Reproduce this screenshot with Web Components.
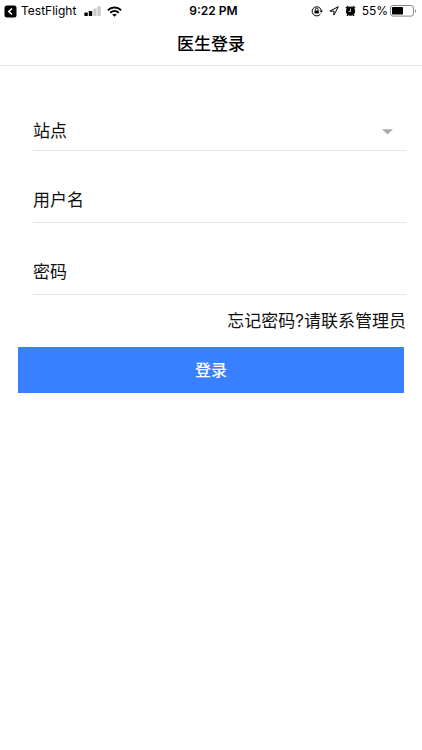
<!DOCTYPE html>
<html lang="zh-CN">
<head>
<meta charset="utf-8">
<meta name="viewport" content="width=device-width, initial-scale=1">
<title>医生登录</title>
<style>
    body {
        margin: 0;
        background-color: white;
        color: #111;
        font-family: Inter, "Noto Sans CJK SC", sans-serif;
        font-size: 17px;
        line-height: 24px;
    }
</style>
</head>
<body>
<login-page></login-page>

<script>
class StatusBar extends HTMLElement {
    constructor() {
        super();
        this.shadowDOM = this.attachShadow({ mode: "open" });
    }

    connectedCallback() {
        this.render();
    }

    render() {
        this.shadowDOM.innerHTML = `
        <style>
        :host {
            display: grid;
            grid-template-columns: 1fr auto 1fr;
            align-items: center;
            height: 22px;
            padding: 0 5px 0 4px;
            font-size: 12px;
            line-height: 22px;
            color: black;
        }

        .group {
            display: flex;
            align-items: center;
        }

        .right {
            justify-content: flex-end;
        }

        .back {
            display: flex;
            align-items: center;
            gap: 4px;
            margin-right: 8px;
            color: inherit;
            text-decoration: none;
        }

        .time {
            padding-left: 6px;
            font-weight: 600;
        }

        .wifi {
            margin-left: 6px;
        }

        .right svg {
            margin-right: 6px;
        }

        .right .battery {
            margin: 0 0 0 2px;
        }
        </style>
        <div class="group">
            <a class="back" href="#">
                <svg width="13" height="13" viewBox="0 0 13 13" aria-hidden="true">
                    <rect x="0.5" y="0.5" width="12" height="12" rx="2.5"/>
                    <path d="M8 3.5 4.8 6.5 8 9.5" fill="none" stroke="white" stroke-width="1.6"/>
                </svg>
                <span>TestFlight</span>
            </a>
            <svg width="17" height="11" viewBox="0 0 17 11" aria-hidden="true">
                <rect x="0.4" y="6.6" width="3.4" height="3.4" rx="0.6"/>
                <rect x="4.8" y="5" width="3.4" height="5" rx="0.6"/>
                <rect x="9.2" y="2.6" width="3.4" height="7.4" rx="0.6" fill="#ccc"/>
                <rect x="13.4" y="0.2" width="3.4" height="9.8" rx="0.6" fill="#ccc"/>
            </svg>
            <svg class="wifi" width="15" height="11" viewBox="0 0 15 11" aria-hidden="true">
                <g fill="none" stroke="black" stroke-width="1.9">
                    <path d="M0.9 4.2C4.6 0.6 10.4 0.6 14.1 4.2"/>
                    <path d="M3.3 6.7C5.7 4.5 9.3 4.5 11.7 6.7"/>
                </g>
                <path d="M5.2 8.5C6.5 7.4 8.5 7.4 9.8 8.5L7.5 10.8Z"/>
            </svg>
        </div>
        <span class="time">9:22 PM</span>
        <div class="group right">
            <svg width="12" height="12" viewBox="0 0 12 12" aria-hidden="true">
                <path d="M9.5 9A4.6 4.6 0 1 1 10.2 5.2" fill="none" stroke="black" stroke-width="1"/>
                <path d="M8.4 5.4H12L10.3 7.8Z"/>
                <rect x="3.5" y="5.4" width="4.4" height="3.2" rx="0.4"/>
                <path d="M4.4 5.6V4.4A1.3 1.3 0 0 1 7 4.4V5.6" fill="none" stroke="black" stroke-width="0.9"/>
            </svg>
            <svg width="10" height="10" viewBox="0 0 10 10" aria-hidden="true">
                <path d="M9.3 0.7 0.9 5.1H4.9V9.1Z" fill="none" stroke="black" stroke-width="1"/>
            </svg>
            <svg width="11" height="12" viewBox="0 0 11 12" aria-hidden="true">
                <circle cx="5.5" cy="6.2" r="4.6"/>
                <path d="M0.9 3.3 3.2 1.3M7.8 1.3 10.1 3.3" stroke="black" stroke-width="1.5"/>
                <path d="M2.8 9.6 2 10.8M8.2 9.6 9 10.8" stroke="black" stroke-width="1.2"/>
                <path d="M5.5 3.6V6.5H3.6" fill="none" stroke="white" stroke-width="0.8"/>
            </svg>
            <span>55%</span>
            <svg class="battery" width="27" height="12" viewBox="0 0 27 12" aria-hidden="true">
                <rect x="0.5" y="0.5" width="23" height="10.6" rx="2.5" fill="none" stroke="#888"/>
                <rect x="2" y="2" width="11" height="7.6" rx="0.8"/>
                <path d="M25 4V7.8C26.4 7.2 26.4 4.6 25 4Z" fill="#888"/>
            </svg>
        </div>
        `;
    }
}

class NavBar extends HTMLElement {
    constructor() {
        super();
        this.shadowDOM = this.attachShadow({ mode: "open" });
    }

    connectedCallback() {
        this.render();
    }

    render() {
        this.shadowDOM.innerHTML = `
        <style>
        :host {
            display: block;
            padding: 10px 16px 9px;
            border-bottom: 1px solid #e2e2e2;
            text-align: center;
        }

        h1 {
            margin: 0;
            font-size: 17px;
            line-height: 24px;
            font-weight: 500;
            color: black;
        }
        </style>
        <h1><slot></slot></h1>
        `;
    }
}

const fieldStyle = `
        :host {
            display: block;
        }

        .field {
            display: flex;
            align-items: flex-end;
            box-sizing: border-box;
            height: 72px;
            padding-bottom: 10px;
            border-bottom: 1px solid #e4e4e4;
        }

        input, select {
            flex: 1;
            min-width: 0;
            height: 24px;
            margin: 0 0 0 12px;
            padding: 0;
            border: 0;
            outline: 0;
            background: transparent;
            color: inherit;
            font: inherit;
        }
`;

class TextField extends HTMLElement {
    constructor() {
        super();
        this.shadowDOM = this.attachShadow({ mode: "open" });
    }

    connectedCallback() {
        this.render();
    }

    render() {
        const type = this.getAttribute("type") || "text";
        this.shadowDOM.innerHTML = `
        <style>${fieldStyle}</style>
        <div class="field">
            <label for="fieldInput">${this.getAttribute("label")}</label>
            <input id="fieldInput" type="${type}">
        </div>
        `;
    }
}

class SelectField extends HTMLElement {
    constructor() {
        super();
        this.shadowDOM = this.attachShadow({ mode: "open" });
    }

    connectedCallback() {
        this.render();
    }

    render() {
        this.shadowDOM.innerHTML = `
        <style>
        ${fieldStyle}
        .field {
            padding-bottom: 7px;
            padding-right: 13px;
        }

        select {
            appearance: none;
        }

        svg {
            margin-bottom: 8px;
        }
        </style>
        <div class="field">
            <label for="fieldSelect">${this.getAttribute("label")}</label>
            <select id="fieldSelect"><option value=""></option></select>
            <svg width="11" height="6" viewBox="0 0 11 6" aria-hidden="true">
                <path d="M0 0.3H11L5.5 5.6Z" fill="#aaa"/>
            </svg>
        </div>
        `;
    }
}

class PrimaryButton extends HTMLElement {
    constructor() {
        super();
        this.shadowDOM = this.attachShadow({ mode: "open" });
    }

    connectedCallback() {
        this.render();
    }

    render() {
        this.shadowDOM.innerHTML = `
        <style>
        :host {
            display: block;
        }

        button {
            display: block;
            width: 100%;
            padding: 11px 16px;
            border: 0;
            background-color: #3880ff;
            color: white;
            font: inherit;
            font-size: 16px;
            font-weight: 500;
            cursor: pointer;
        }
        </style>
        <button type="button"><slot></slot></button>
        `;
    }
}

class LoginPage extends HTMLElement {
    constructor() {
        super();
        this.shadowDOM = this.attachShadow({ mode: "open" });
    }

    connectedCallback() {
        this.render();
    }

    render() {
        this.shadowDOM.innerHTML = `
        <style>
        :host {
            display: block;
        }

        main {
            padding: 13px 18px;
        }

        .fields {
            padding-left: 15px;
            margin-right: -2px;
        }

        .forgot {
            display: block;
            width: fit-content;
            margin: 14px 0 14px auto;
            color: inherit;
            font-size: 17px;
            text-decoration: none;
        }
        </style>
        <status-bar></status-bar>
        <nav-bar>医生登录</nav-bar>
        <main>
            <div class="fields">
                <select-field label="站点"></select-field>
                <text-field label="用户名"></text-field>
                <text-field label="密码" type="password"></text-field>
                <a class="forgot" href="#">忘记密码?请联系管理员</a>
            </div>
            <primary-button>登录</primary-button>
        </main>
        `;
    }
}

customElements.define("status-bar", StatusBar);
customElements.define("nav-bar", NavBar);
customElements.define("text-field", TextField);
customElements.define("select-field", SelectField);
customElements.define("primary-button", PrimaryButton);
customElements.define("login-page", LoginPage);
</script>
</body>
</html>
